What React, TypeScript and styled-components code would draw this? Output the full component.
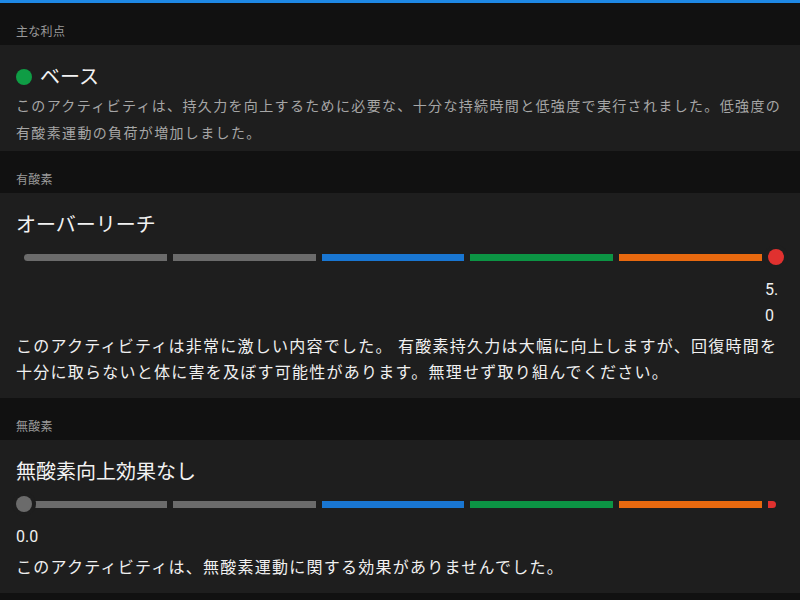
import styled, { createGlobalStyle } from "styled-components";

const GlobalStyle = createGlobalStyle`
  html, body {
    margin: 0;
    padding: 0;
    background: #111111;
  }
  body {
    font-family: Roboto, "Noto Sans CJK JP", sans-serif;
    color: #f0f0f0;
  }
`;

const Page = styled.div`
  width: 800px;
  min-height: 600px;
  background: #111111;
  border-top: 3px solid #1e88e5;
  box-sizing: border-box;
`;

const SectionHeader = styled.div`
  padding: 21px 16px 5px;
  font-size: 12px;
  line-height: 16px;
  letter-spacing: 0.3px;
  color: #9a9a9a;
`;

const Card = styled.div<{ $tight?: boolean }>`
  background: #1e1e1e;
  padding: 18px 16px ${(p) => (p.$tight ? "4px" : "12px")};
`;

const Title = styled.div`
  display: flex;
  align-items: center;
  gap: 8px;
  font-size: 20px;
  line-height: 28px;
  color: #f2f2f2;
`;

const Dot = styled.span<{ $color: string }>`
  width: 16px;
  height: 16px;
  border-radius: 50%;
  background: ${(p) => p.$color};
`;

const Muted = styled.p`
  margin: 2px 0 0;
  font-size: 14px;
  line-height: 27px;
  letter-spacing: 1.35px;
  color: #a6a6a6;
`;

const Body = styled.p`
  margin: 5px 0 0;
  font-size: 16px;
  line-height: 26px;
  letter-spacing: 1.25px;
  color: #f0f0f0;
`;

const Bar = styled.div`
  position: relative;
  display: flex;
  align-items: center;
  gap: 6px;
  height: 16px;
  margin-top: 10px;
  padding: 0 8px;
`;

const Segment = styled.div<{ $color: string; $end?: boolean; $start?: boolean }>`
  flex: ${(p) => (p.$end ? "0 0 8px" : "1 1 0")};
  height: 7px;
  background: ${(p) => p.$color};
  border-radius: ${(p) =>
    p.$start ? "4px 0 0 4px" : p.$end ? "0 4px 4px 0" : "0"};
`;

const Marker = styled.div<{ $pos: number; $color: string }>`
  position: absolute;
  top: 0;
  left: calc(${(p) => p.$pos} * (100% - 16px));
  width: 16px;
  height: 16px;
  border-radius: 50%;
  background: ${(p) => p.$color};
  box-shadow: 0 0 0 4px #1e1e1e;
`;

const Value = styled.div<{ $pos: number }>`
  margin-top: 12px;
  margin-left: max(0px, calc(8px + ${(p) => p.$pos} * (100% - 16px) - 11px));
  font-size: 16px;
  line-height: 26px;
  color: #f0f0f0;
  overflow-wrap: anywhere;
  word-break: break-all;
`;

const segments = ["#6b6b6b", "#6b6b6b", "#1976d2", "#0c9444", "#e8690f"];

const Gauge = ({ value, color }: { value: number; color: string }) => {
  const pos = value / 5;
  return (
    <>
      <Bar>
        {segments.map((c, i) => (
          <Segment key={i} $color={c} $start={i === 0} />
        ))}
        <Segment $color="#e0312f" $end />
        <Marker $pos={pos} $color={color} />
      </Bar>
      <Value $pos={pos}>{value.toFixed(1)}</Value>
    </>
  );
};

export default function App() {
  return (
    <>
      <GlobalStyle />
      <Page>
        <SectionHeader>主な利点</SectionHeader>
        <Card $tight>
          <Title>
            <Dot $color="#0f9d45" />
            ベース
          </Title>
          <Muted>
            このアクティビティは、持久力を向上するために必要な、十分な持続時間と低強度で実行されました。低強度の有酸素運動の負荷が増加しました。
          </Muted>
        </Card>

        <SectionHeader>有酸素</SectionHeader>
        <Card>
          <Title>オーバーリーチ</Title>
          <Gauge value={5} color="#e0312f" />
          <Body>
            このアクティビティは非常に激しい内容でした。
            有酸素持久力は大幅に向上しますが、回復時間を十分に取らないと体に害を及ぼす可能性があります。無理せず取り組んでください。
          </Body>
        </Card>

        <SectionHeader>無酸素</SectionHeader>
        <Card>
          <Title>無酸素向上効果なし</Title>
          <Gauge value={0} color="#6b6b6b" />
          <Body>このアクティビティは、無酸素運動に関する効果がありませんでした。</Body>
        </Card>
      </Page>
    </>
  );
}
